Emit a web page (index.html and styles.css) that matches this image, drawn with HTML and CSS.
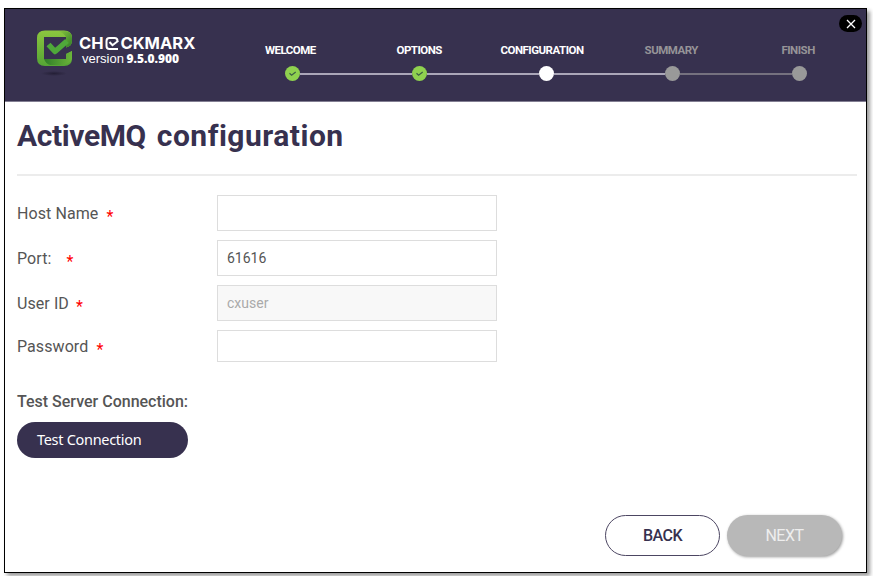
FILE: index.html
```
<!DOCTYPE html>
<html lang="en">

<head>
    <meta charset="UTF-8">
    <meta name="viewport" content="width=device-width, initial-scale=1.0">
    <title>ActiveMQ configuration</title>

    <link rel="stylesheet" href="styles.css">
</head>

<body>
    <main class="window">
        <header class="header">
            <div class="brand">
                <svg class="logo" width="38" height="48" viewBox="0 0 38 48">
                    <defs>
                        <linearGradient id="green" x1="0" y1="0" x2="0" y2="1">
                            <stop offset="0" stop-color="#8cc63f" />
                            <stop offset="1" stop-color="#55a535" />
                        </linearGradient>
                        <linearGradient id="fold" x1="0" y1="0" x2="1" y2="0">
                            <stop offset="0" stop-color="#2f7d28" />
                            <stop offset="1" stop-color="#6cb63a" />
                        </linearGradient>
                        <linearGradient id="corner" x1="0" y1="0" x2="1" y2="1">
                            <stop offset="0" stop-color="#8cc63f" />
                            <stop offset="1" stop-color="#2f7d28" />
                        </linearGradient>
                        <radialGradient id="shade">
                            <stop offset="0" stop-color="#241f36" />
                            <stop offset="1" stop-color="#37314f" />
                        </radialGradient>
                    </defs>
                    <ellipse cx="18" cy="43.500" rx="13" ry="2.500" fill="url(#shade)" />
                    <path fill="url(#green)" d="M9 0.500H28Q36 0.500 36 8V11Q36 16 30 17.500V7H8V29H30V24L36 21V28Q36 36 28 36H9Q1 36 1 28V8Q1 0.500 9 0.500Z" />
                    <path fill="url(#corner)" d="M22 1H28Q36 1 36 8V11Q36 16 30 17.500V7Q28 3 22 1Z" />
                    <path fill="url(#fold)" d="M8 29H30V24L36 21V28Q36 32 30 34Q28 35 22 35H14Q10 34 8 29Z" />
                    <path fill="none" stroke="#4fa83a" stroke-width="5.500" stroke-linejoin="round" d="M12.500 14.500L19 21.500L31 11" />
                </svg>
                <div class="brand-text">
                    <div class="brand-name">
                        <span>CH</span>
                        <svg width="15" height="13" viewBox="0 0 15 13" fill="none" stroke="#fff">
                            <path stroke-width="2" d="M12.500 5V4Q12.500 1 9.500 1H4.500Q1.500 1 1.500 4V9Q1.500 12 4.500 12H13" />
                            <path stroke-width="2" d="M4.500 5L7.500 8.200L13 4" />
                        </svg>
                        <span>CKMARX</span>
                    </div>
                    <div class="version">version <b>9.5.0.900</b></div>
                </div>
            </div>

            <nav class="steps">
                <div class="step-names">
                    <span class="welcome">WELCOME</span>
                    <span>OPTIONS</span>
                    <span class="current">CONFIGURATION</span>
                    <span class="todo">SUMMARY</span>
                    <span class="todo">FINISH</span>
                </div>
                <div class="track">
                    <svg class="dot done" viewBox="0 0 15 15"><path d="M4.500 7.300L6.600 9.200L10.700 6" /></svg>
                    <i class="line"></i>
                    <svg class="dot done" viewBox="0 0 15 15"><path d="M4.500 7.300L6.600 9.200L10.700 6" /></svg>
                    <i class="line"></i>
                    <i class="dot now"></i>
                    <i class="line"></i>
                    <i class="dot"></i>
                    <i class="line dim"></i>
                    <i class="dot"></i>
                </div>
            </nav>

            <button class="close" type="button" aria-label="Close">
                <svg width="10" height="10" viewBox="0 0 10 10"><path d="M1 1L9 9M9 1L1 9" stroke="#fff" stroke-width="1.300" /></svg>
            </button>
        </header>

        <h1><span class="product">ActiveMQ</span> configuration</h1>

        <form id="mqForm">
            <div class="row">
                <label for="host">Host Name <em class="gap-host">*</em></label>
                <input type="text" id="host">
            </div>
            <div class="row">
                <label for="port">Port: <em class="gap-port">*</em></label>
                <input type="text" id="port" value="61616">
            </div>
            <div class="row user">
                <label for="user">User ID <em class="gap-user">*</em></label>
                <input type="text" id="user" value="cxuser" disabled>
            </div>
            <div class="row password">
                <label for="password">Password <em class="gap-host">*</em></label>
                <input type="password" id="password">
            </div>

            <p class="test-title">Test Server Connection:</p>
            <button class="test" type="button">Test Connection</button>

            <div class="actions">
                <button class="back" type="button">BACK</button>
                <button class="next" type="submit" disabled>NEXT</button>
            </div>
        </form>
    </main>
</body>

</html>
```
FILE: styles.css
```
* {
    box-sizing: border-box;
}

body {
    margin: 0;
    padding: 8px 0 0 4px;
    height: 576px;
    overflow: hidden;
    background: white;
    font-family: Roboto, "Liberation Sans", sans-serif;
}

button,
input {
    font-family: inherit;
}

.window {
    width: 863px;
    height: 565px;
    border: 1px solid black;
    background: white;
    box-shadow: 3px 3px 4px rgba(0, 0, 0, 0.4);
}

.header {
    display: flex;
    height: 93px;
    background: #37314f;
    border-bottom: 1px solid #827e92;
}

/* Logo and version */
.brand {
    display: flex;
    width: 239px;
    padding: 21px 0 0 31px;
}

.logo {
    flex: none;
}

.brand-text {
    padding: 5px 0 0 5px;
    color: white;
    white-space: nowrap;
}

.brand-name {
    display: flex;
    align-items: center;
    height: 16px;
    font: 700 16.5px/16px Inter, sans-serif;
}

.brand-name svg {
    margin: 0 1px;
}

.version {
    padding: 1px 0 0 3px;
    font: 13px/14px "Liberation Sans", sans-serif;
}

.version b {
    margin-left: -1px;
    font: 800 12px/14px "Open Sans", sans-serif;
    letter-spacing: 0;
}

/* Wizard steps */
.steps {
    width: 587px;
    padding-top: 34px;
}

.step-names {
    display: flex;
    width: 634px;
    margin-left: -15px;
    color: white;
    font-size: 11.5px;
    font-weight: 700;
    letter-spacing: -0.5px;
    line-height: 15px;
}

.step-names span {
    width: 126.8px;
    text-align: center;
}

.step-names .welcome {
    padding-right: 4px;
}

.step-names .current {
    padding-right: 8px;
}

.step-names .todo {
    padding-right: 3px;
    color: #969498;
}

.track {
    display: flex;
    align-items: center;
    width: 522px;
    margin: 8px 0 0 41px;
}

.dot {
    flex: none;
    width: 15px;
    height: 15px;
    border-radius: 50%;
    background: #999;
}

.done {
    background: #8fd14f;
}

.done path {
    fill: none;
    stroke: #3d6046;
    stroke-width: 1.3;
}

.now {
    background: white;
}

.line {
    flex: 1;
    height: 2px;
    background: #aaa6b8;
}

.dim {
    background: #75717f;
}

.close {
    display: flex;
    align-items: center;
    justify-content: center;
    width: 23px;
    height: 17px;
    margin: 6px 0 0 8px;
    padding: 0;
    border: 0;
    border-radius: 9px;
    background: black;
}

h1 {
    height: 74px;
    margin: 0 9px 0 12px;
    padding-top: 14px;
    border-bottom: 2px solid #ececec;
    color: #37314f;
    font-size: 30px;
    font-weight: 700;
    letter-spacing: 0.5px;
    word-spacing: 3px;
    line-height: 40px;
}

.product {
    letter-spacing: -0.4px;
}

/* Form */
form {
    padding: 19px 0 0 12px;
}

.row {
    display: flex;
    align-items: center;
    height: 36px;
    margin-bottom: 9px;
}

label {
    width: 200px;
    padding-top: 1px;
    color: #555;
    font-size: 16px;
    letter-spacing: 0.08px;
    line-height: 20px;
}

label em {
    position: relative;
    top: 3px;
    color: red;
    font-style: normal;
}

.gap-host {
    margin-left: 4px;
}

.gap-port {
    margin-left: 11px;
}

.gap-user {
    margin-left: 3px;
}

input {
    width: 280px;
    height: 36px;
    padding: 0 9px;
    border: 1px solid #ddd;
    background: white;
    color: #555;
    font-size: 14px;
}

input:disabled {
    background: #f8f8f8;
    color: #aaa;
}

.user label {
    padding-top: 2px;
}

.password,
.password input {
    height: 32px;
}

.test-title {
    margin: 30px 0 10px;
    color: #555;
    font-size: 16px;
    font-weight: 500;
    line-height: 20px;
}

.test {
    display: block;
    width: 171px;
    height: 36px;
    padding: 0 0 2px 20px;
    border: 0;
    border-radius: 18px;
    background: #37314f;
    color: white;
    font: 14.5px "Noto Sans", sans-serif;
    letter-spacing: -0.3px;
    text-align: left;
}

.actions {
    display: flex;
    justify-content: flex-end;
    gap: 7px;
    margin: 57px 24px 0 0;
}

.actions button {
    width: 115px;
    height: 41px;
    padding: 0;
    border-radius: 21px;
    font-size: 16px;
    font-weight: 500;
    letter-spacing: -0.5px;
}

.actions .back {
    border: 1px solid #4c4662;
    background: white;
    color: #37314f;
}

.actions .next {
    border: 0;
    background: #b8b8b8;
    color: #eee;
    font-weight: 400;
    box-shadow: 1px 1px 3px rgba(0, 0, 0, 0.4);
}
```
